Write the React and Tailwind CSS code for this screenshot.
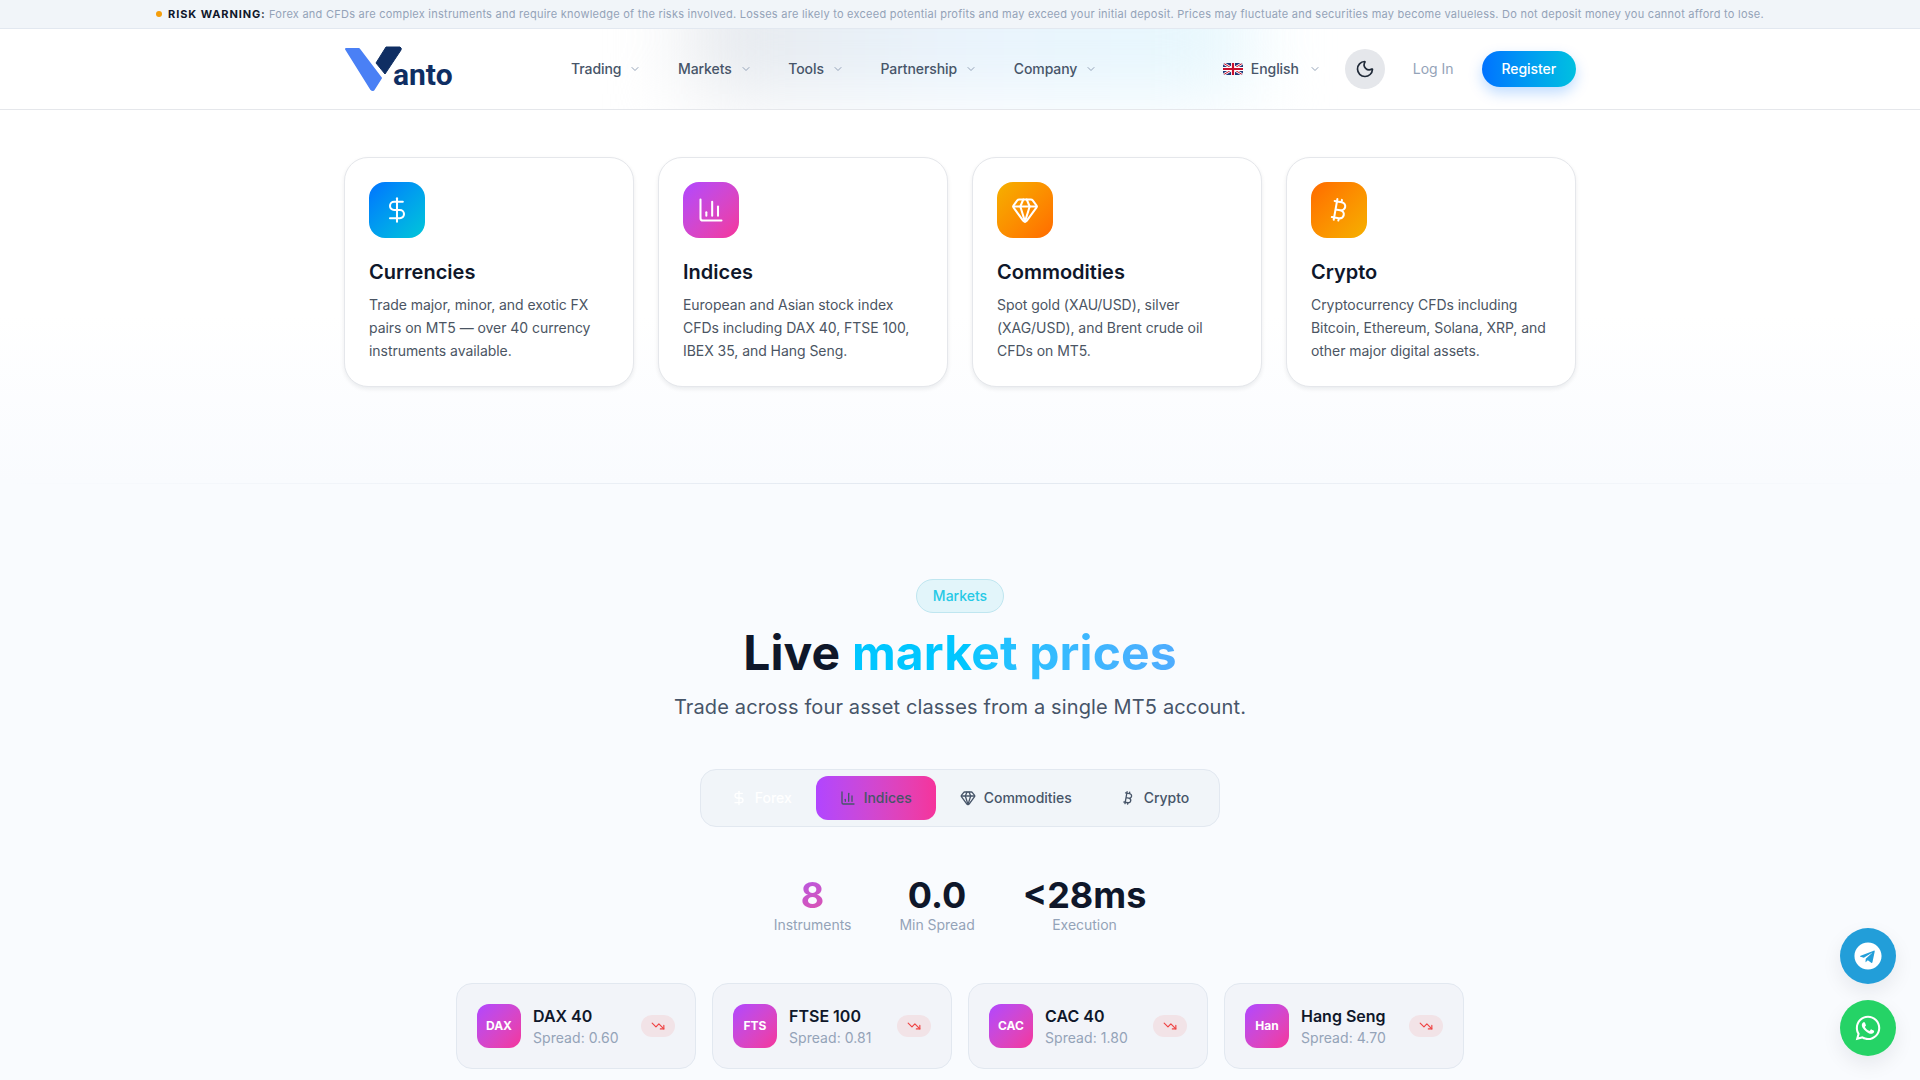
import React from "react";
import { ChevronDown, Moon, DollarSign, ChartColumn, Gem, Bitcoin, TrendingDown } from "lucide-react";
import { FaTelegram, FaWhatsapp } from "react-icons/fa";

const font = { fontFamily: "Inter, 'Liberation Sans', sans-serif" };

function NavItem({ label }) {
  return (
    <div className="flex items-center gap-2 text-sm font-medium tracking-[-0.08px] text-[#475569]">
      <span>{label}</span>
      <ChevronDown size={12} className="text-[#94a3b8]" />
    </div>
  );
}

function Logo() {
  return (
    <div className="relative w-[110px] h-[46px]">
      <svg width="60" height="46" viewBox="0 0 60 46" className="block">
        <path d="M2 3 L15 3 L37 32 L30 43 Q29 45 27 43 Z" fill="#4a80f5" stroke="#4a80f5" strokeWidth="2" strokeLinejoin="round" />
        <path d="M42 1 L56 1 Q58 2 57 4 L41 28 L32 17 Z" fill="#0f2e63" stroke="#0f2e63" strokeWidth="1" strokeLinejoin="round" />
      </svg>
      <span className="absolute left-[49px] top-[11px] text-[30px] leading-[36px] font-bold text-[#0f2e63]" style={{ fontFamily: "Roboto, sans-serif" }}>anto</span>
    </div>
  );
}

function Flag() {
  return (
    <svg width="20" height="12" viewBox="0 0 20 12" className="rounded-[3px]">
      <rect width="20" height="12" fill="#1f3a7a" />
      <path d="M0 0 L20 12 M20 0 L0 12" stroke="#fff" strokeWidth="2.6" />
      <path d="M0 0 L20 12 M20 0 L0 12" stroke="#c8102e" strokeWidth="1" />
      <path d="M10 0 V12 M0 6 H20" stroke="#fff" strokeWidth="4" />
      <path d="M10 0 V12 M0 6 H20" stroke="#c8102e" strokeWidth="2.2" />
    </svg>
  );
}

function MarketCard({ icon: Icon, grad, title, children }) {
  return (
    <div className="rounded-3xl border border-[#e5e7eb] bg-white p-6 shadow-[0_2px_4px_rgba(15,23,42,0.08)]">
      <div className={`flex h-14 w-14 items-center justify-center rounded-2xl ${grad}`}>
        <Icon size={28} strokeWidth={1.75} className="text-white" />
      </div>
      <h3 className="mt-5 text-xl leading-7 font-semibold text-[#0f172a]">{title}</h3>
      <p className="mt-[7px] text-sm leading-[23.1px] tracking-[-0.05px] text-[#4b5563]">{children}</p>
    </div>
  );
}

function Tab({ icon: Icon, label, className }) {
  return (
    <div className={`flex h-11 items-center gap-2 rounded-xl px-6 text-sm font-medium tracking-[-0.03px] ${className}`}>
      <Icon size={16} />
      <span>{label}</span>
    </div>
  );
}

function Stat({ value, label, grad }) {
  return (
    <div className="flex flex-col items-center">
      <div className={`w-full text-center text-4xl leading-10 font-bold ${grad ? "bg-gradient-to-br from-[#a855f7] to-[#ec4899] bg-clip-text text-transparent" : "text-[#0f172a]"}`}>{value}</div>
      <div className="text-sm leading-5 tracking-[-0.03px] text-[#94a3b8]">{label}</div>
    </div>
  );
}

function Instrument({ code, name, spread }) {
  return (
    <div className="flex items-center gap-3 rounded-2xl border border-[#e2e8f0] bg-[#f2f4f9] p-5">
      <div className="flex h-11 w-11 shrink-0 items-center justify-center rounded-xl bg-gradient-to-br from-[#b145ff] to-[#f5339b] text-xs font-bold text-white">{code}</div>
      <div className="h-11 min-w-0 flex-1 pt-px">
        <div className="text-base leading-[22px] font-semibold text-[#0f172a]">{name}</div>
        <div className="text-sm leading-[22px] tracking-[0.05px] text-[#94a3b8]">{spread}</div>
      </div>
      <div className="flex h-[22px] w-[34px] items-center justify-center rounded-full bg-[#f2e3e7]">
        <TrendingDown size={14} className="text-[#ef4444]" />
      </div>
    </div>
  );
}

export default function App() {
  return (
    <div className="h-[1080px] overflow-hidden bg-[#f9fbfe]" style={font}>
      <div className="flex h-[29px] items-center justify-center gap-[6px] border-b border-[#e2e8f0] bg-[#f1f5f9] text-[11px] tracking-[0.25px] text-[#94a3b8]">
        <span className="h-[6px] w-[6px] rounded-full bg-[#f59e0b]" />
        <span><b className="font-bold tracking-[0.9px] text-[#0f172a]">RISK WARNING:</b> Forex and CFDs are complex instruments and require knowledge of the risks involved. Losses are likely to exceed potential profits and may exceed your initial deposit. Prices may fluctuate and securities may become valueless. Do not deposit money you cannot afford to lose.</span>
      </div>

      <header className="relative h-[81px] overflow-hidden border-b border-[#e5e7eb] bg-white">
        <div className="absolute left-[690px] top-[-50px] h-[115px] w-[560px] bg-gradient-to-r from-[#e4e6ea] via-[#e6f2fc] to-[#e4f7fd] blur-2xl" />
        <div className="relative mx-auto flex h-full w-[1232px] items-center">
          <Logo />
          <nav className="ml-[117px] flex items-center gap-[36.6px]">
            <NavItem label="Trading" />
            <NavItem label="Markets" />
            <NavItem label="Tools" />
            <NavItem label="Partnership" />
            <NavItem label="Company" />
          </nav>
          <div className="ml-auto flex items-center">
            <div className="flex items-center gap-2 text-sm font-medium tracking-[-0.08px] text-[#475569]">
              <Flag />
              <span>English</span>
              <ChevronDown size={12} className="ml-[2px] text-[#94a3b8]" />
            </div>
            <div className="ml-6 flex h-10 w-10 items-center justify-center rounded-full bg-[#e5e7eb] text-[#1f2937]">
              <Moon size={20} />
            </div>
            <span className="ml-7 text-sm tracking-[-0.03px] text-[#94a3b8]">Log In</span>
            <div className="ml-7 flex h-9 items-center rounded-full bg-gradient-to-r from-[#0072ff] to-[#00c0e0] px-5 text-sm font-medium tracking-[-0.08px] text-white shadow-[0_6px_14px_rgba(0,114,255,0.25)]">Register</div>
          </div>
        </div>
      </header>

      <section className="bg-gradient-to-b from-white from-[55%] to-[#f9fbfe] pt-[47px] pb-[96px]">
        <div className="mx-auto grid w-[1232px] grid-cols-4 gap-6">
          <MarketCard icon={DollarSign} grad="bg-gradient-to-br from-[#0072ff] to-[#00c6d8]" title="Currencies">Trade major, minor, and exotic FX pairs on MT5 — over 40 currency instruments available.</MarketCard>
          <MarketCard icon={ChartColumn} grad="bg-gradient-to-br from-[#b145ff] to-[#f5339b]" title="Indices">European and Asian stock index CFDs including DAX 40, FTSE 100, IBEX 35, and Hang Seng.</MarketCard>
          <MarketCard icon={Gem} grad="bg-gradient-to-br from-[#f5b000] to-[#ff6a00]" title="Commodities">Spot gold (XAU/USD), silver (XAG/USD), and Brent crude oil CFDs on MT5.</MarketCard>
          <MarketCard icon={Bitcoin} grad="bg-gradient-to-br from-[#ff6a00] to-[#f5b000]" title="Crypto">Cryptocurrency CFDs including Bitcoin, Ethereum, Solana, XRP, and other major digital assets.</MarketCard>
        </div>
      </section>

      <div className="h-px bg-gradient-to-r from-transparent via-[#e2e8f0] to-transparent" />

      <section className="flex flex-col items-center pt-[95px]">
        <div className="flex h-[34px] items-center rounded-full border border-[#bfe6f0] bg-[#e2f5fa] px-4 text-sm font-medium text-[#26c9e6]">Markets</div>
        <h2 className="mt-[10px] text-5xl leading-[60px] font-bold tracking-[0.14px] text-[#0f172a]">
          Live <span className="bg-gradient-to-r from-[#00c6ff] from-[35%] to-[#4facfe] bg-clip-text text-transparent">market prices</span>
        </h2>
        <p className="mt-[10px] text-xl leading-7 tracking-[0.14px] text-[#475569]">Trade across four asset classes from a single MT5 account.</p>

        <div className="mt-12 flex items-center rounded-2xl border border-[#e2e8f0] bg-[#f1f5f9] p-[6px]">
          <Tab icon={DollarSign} label="Forex" className="text-white" />
          <Tab icon={ChartColumn} label="Indices" className="bg-gradient-to-r from-[#b145ff] to-[#f5339b] text-[#475569]" />
          <Tab icon={Gem} label="Commodities" className="text-[#475569]" />
          <Tab icon={Bitcoin} label="Crypto" className="text-[#475569]" />
        </div>

        <div className="mt-12 flex items-start gap-12">
          <Stat value="8" label="Instruments" grad />
          <Stat value="0.0" label="Min Spread" />
          <Stat value="<28ms" label="Execution" />
        </div>

        <div className="mt-12 grid w-[1008px] grid-cols-4 gap-4">
          <Instrument code="DAX" name="DAX 40" spread="Spread: 0.60" />
          <Instrument code="FTS" name="FTSE 100" spread="Spread: 0.81" />
          <Instrument code="CAC" name="CAC 40" spread="Spread: 1.80" />
          <Instrument code="Han" name="Hang Seng" spread="Spread: 4.70" />
        </div>
      </section>

      <div className="fixed right-6 bottom-6 flex flex-col gap-4">
        <div className="flex h-14 w-14 items-center justify-center rounded-full bg-[#229ed9] text-white shadow-[0_8px_20px_rgba(15,23,42,0.08)]"><FaTelegram size={28} /></div>
        <div className="flex h-14 w-14 items-center justify-center rounded-full bg-[#25d366] text-white shadow-[0_8px_20px_rgba(15,23,42,0.08)]"><FaWhatsapp size={28} /></div>
      </div>
    </div>
  );
}
